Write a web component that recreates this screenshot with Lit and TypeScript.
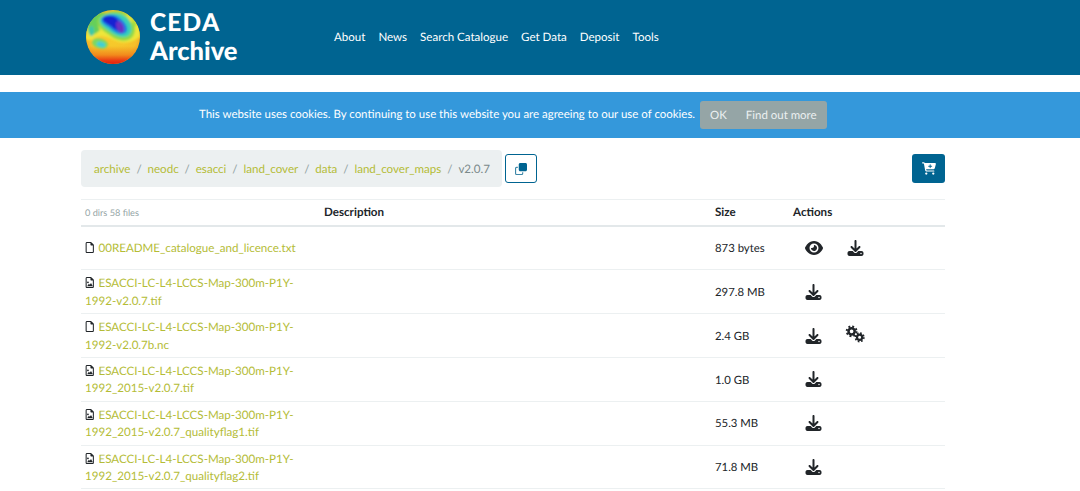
import { LitElement, html, css, svg } from "lit";
import { customElement } from "lit/decorators.js";

const icon = (vb: string, d: string, cls: string) => html`<svg class=${cls} viewBox=${vb} fill="currentColor"><path d=${d}></path></svg>`;
const DL = "M288 32c0-17.7-14.3-32-32-32s-32 14.3-32 32V274.7l-73.4-73.4c-12.5-12.5-32.8-12.5-45.3 0s-12.5 32.8 0 45.3l128 128c12.5 12.5 32.8 12.5 45.3 0l128-128c12.5-12.5 12.5-32.8 0-45.3s-32.8-12.5-45.3 0L288 274.7V32zM64 352c-35.3 0-64 28.7-64 64v32c0 35.3 28.7 64 64 64H448c35.3 0 64-28.7 64-64V416c0-35.3-28.7-64-64-64H346.5l-45.3 45.3c-25 25-65.5 25-90.5 0L165.5 352H64zm368 56a24 24 0 1 1 0 48 24 24 0 1 1 0-48z";
const EYE = "M288 32c-80.8 0-145.5 36.8-192.6 80.6C48.6 156 17.3 208 2.5 243.7c-3.3 7.9-3.3 16.7 0 24.6C17.3 304 48.6 356 95.4 399.4C142.5 443.2 207.2 480 288 480s145.5-36.8 192.6-80.6c46.8-43.5 78.1-95.4 93-131.1c3.3-7.9 3.3-16.7 0-24.6c-14.9-35.7-46.2-87.7-93-131.1C433.5 68.8 368.8 32 288 32zM144 256a144 144 0 1 1 288 0 144 144 0 1 1 -288 0zm144-64c0 35.3-28.7 64-64 64c-7.1 0-13.9-1.2-20.3-3.3c-5.5-1.8-11.9 1.6-11.7 7.4c.3 6.9 1.3 13.8 3.2 20.7c13.7 51.2 66.4 81.6 117.6 67.9s81.6-66.4 67.9-117.6c-11.1-41.5-47.8-69.4-88.6-71.1c-5.8-.2-9.2 6.1-7.4 11.7c2.1 6.4 3.3 13.2 3.3 20.3z";
const FILE = "M320 464c8.8 0 16-7.2 16-16V160H256c-17.7 0-32-14.3-32-32V48H64c-8.8 0-16 7.2-16 16V448c0 8.8 7.2 16 16 16H320zM0 64C0 28.7 28.7 0 64 0H229.5c17 0 33.3 6.7 45.3 18.7l90.5 90.5c12 12 18.7 28.3 18.7 45.3V448c0 35.3-28.7 64-64 64H64c-35.3 0-64-28.7-64-64V64z";
const IMG = FILE + "M150 250a42 42 0 1 1 -84 0 42 42 0 1 1 84 0zM70 430l80-120 45 55 55-85 85 150z";
const CART = "M0 24C0 10.7 10.7 0 24 0H69.5c22 0 41.5 12.8 50.6 32h411c26.3 0 45.5 25 38.6 50.4l-41 152.3c-8.5 31.4-37 53.3-69.5 53.3H170.7l5.4 28.5c2.2 11.3 12.1 19.5 23.6 19.5H488c13.3 0 24 10.7 24 24s-10.7 24-24 24H199.7c-34.6 0-64.3-24.6-70.7-58.5L77.4 54.5c-.7-3.8-4-6.5-7.9-6.5H24C10.7 48 0 37.3 0 24zM128 464a48 48 0 1 1 96 0 48 48 0 1 1 -96 0zm336-48a48 48 0 1 1 0 96 48 48 0 1 1 0-96zM252 160c0 11 9 20 20 20h44v44c0 11 9 20 20 20s20-9 20-20V180h44c11 0 20-9 20-20s-9-20-20-20H356V96c0-11-9-20-20-20s-20 9-20 20v44H272c-11 0-20 9-20 20z";

const gears = html`<svg class="gears" viewBox="0 0 20 18" fill="none" stroke="currentColor">
  <circle cx="6.6" cy="6.3" r="3.1" stroke-width="2.5"></circle>
  <circle cx="6.6" cy="6.3" r="4.9" stroke-width="2" stroke-dasharray="1.9 1.95"></circle>
  <circle cx="14.6" cy="12.3" r="2.6" stroke-width="2.2"></circle>
  <circle cx="14.6" cy="12.3" r="4.2" stroke-width="1.8" stroke-dasharray="1.65 1.65"></circle>
</svg>`;

const clone = html`<svg class="clone" viewBox="0 0 512 512">
  <path fill="#006491" d="M224 352H448c35.300 0 64-28.700 64-64V64c0-35.300-28.700-64-64-64H224c-35.300 0-64 28.700-64 64V288c0 35.300 28.700 64 64 64z"></path>
  <path fill="none" stroke="#3d87a8" stroke-width="48" d="M120 184H64c-22 0-40 18-40 40V448c0 22 18 40 40 40H288c22 0 40-18 40-40V392"></path>
</svg>`;

const globe = html`<svg class="globe" viewBox="0 0 54 54">
  ${svg`<defs>
    <clipPath id="gc"><circle cx="27" cy="27" r="27"></circle></clipPath>
    <filter id="b1" x="-40%" y="-40%" width="180%" height="180%"><feGaussianBlur stdDeviation="1"></feGaussianBlur></filter>
    <radialGradient id="gb" cx="50%" cy="45%" r="60%"><stop offset="0" stop-color="#f6cf2c"></stop><stop offset=".75" stop-color="#f6bf2a"></stop><stop offset="1" stop-color="#ee9a22"></stop></radialGradient>
    <linearGradient id="gr" x1="0" y1="0" x2="0" y2="1"><stop offset="0" stop-color="#f0901e" stop-opacity="0"></stop><stop offset=".5" stop-color="#f28a1c"></stop><stop offset=".8" stop-color="#ea3a14"></stop><stop offset="1" stop-color="#e0200f"></stop></linearGradient>
  </defs>
  <g clip-path="url(#gc)">
    <rect width="54" height="54" fill="url(#gb)"></rect>
    <rect y="36" width="54" height="18" fill="url(#gr)"></rect>
    <g filter="url(#b1)">
      <path d="M0 8H54V26C46 34 36 34 28 30C20 26 12 24 6 30L0 30Z" fill="#eee63a"></path>
      <path d="M2 12C6 4 14 2 20 3C14 8 10 14 14 20C10 24 6 26 3 24C1 20 1 16 2 12Z" fill="#66cf5a"></path>
      <ellipse cx="5.5" cy="21" rx="2.5" ry="5" fill="#3cc8a8"></ellipse>
      <path d="M12 9C17 0 38 -2 45 7C51 14 50 26 44 29C37 33 28 29 22 24C16 20 9 15 12 9Z" fill="#8ed94a"></path>
      <path d="M14 9C19 2 35 2 41 8C47 14 47 23 42 26C36 29 28 25 23 21C17 17 12 13 14 9Z" fill="#38d0b8"></path>
      <path d="M16 8C20 3 30 4 35 9C41 14 43 21 39 23C35 26 28 22 24 18C19 15 14 12 16 8Z" fill="#1f78e6"></path>
      <path d="M17 8C21 5 29 5 32 10C35 14 38 19 36 21C33 22 28 19 25 16C21 13 15 11 17 8Z" fill="#1722d2"></path>
      <ellipse cx="34" cy="17" rx="3.6" ry="6.2" transform="rotate(-22 34 17)" fill="#6a30c4"></ellipse>
      <path d="M36 4C42 1 50 8 51 16C47 16 44 12 42 8Z" fill="#a8dc3e"></path>
      <path d="M40 4C44 5 47 9 47 13C44 11 42 8 40 4Z" fill="#f0e63a"></path>
      <ellipse cx="14" cy="33.5" rx="8" ry="5" transform="rotate(15 14 33.5)" fill="#7cd860"></ellipse>
      <ellipse cx="15" cy="34.5" rx="4.5" ry="2.7" transform="rotate(15 15 34.5)" fill="#3fcfd6"></ellipse>
    </g>
  </g>`}
</svg>`;

type Row = { n: string; img: boolean; size: string; acts: string[] };
const rows: Row[] = [
  { n: "00README_catalogue_and_licence.txt", img: false, size: "873 bytes", acts: ["eye", "dl"] },
  { n: "ESACCI-LC-L4-LCCS-Map-300m-P1Y-1992-v2.0.7.tif", img: true, size: "297.8 MB", acts: ["dl"] },
  { n: "ESACCI-LC-L4-LCCS-Map-300m-P1Y-1992-v2.0.7b.nc", img: false, size: "2.4 GB", acts: ["dl", "gears"] },
  { n: "ESACCI-LC-L4-LCCS-Map-300m-P1Y-1992_2015-v2.0.7.tif", img: true, size: "1.0 GB", acts: ["dl"] },
  { n: "ESACCI-LC-L4-LCCS-Map-300m-P1Y-1992_2015-v2.0.7_qualityflag1.tif", img: true, size: "55.3 MB", acts: ["dl"] },
  { n: "ESACCI-LC-L4-LCCS-Map-300m-P1Y-1992_2015-v2.0.7_qualityflag2.tif", img: true, size: "71.8 MB", acts: ["dl"] },
];

@customElement("app-root")
export class AppRoot extends LitElement {
  static styles = css`
    :host { display: block; font-family: Lato, "Liberation Sans", sans-serif; font-size: 11.6px; line-height: 17.4px; color: #212529; background: #fff; height: 491px; overflow: hidden; text-rendering: geometricPrecision; }
    a { color: inherit; text-decoration: none; }
    .top { height: 75px; background: #006491; display: flex; align-items: center; padding-left: 86px; box-sizing: border-box; }
    .brand { display: flex; align-items: center; gap: 10px; width: 248px; color: #fff; }
    .globe { width: 54px; height: 54px; flex: none; margin-top: -2px; }
    .logotext { font-family: Lato, sans-serif; font-weight: 900; font-size: 25.5px; line-height: 28px; margin-top: -3px; display: block; }
    .logotext b { font-size: 24.5px; letter-spacing: 1.2px; font-weight: 900; }
    nav { display: flex; gap: 13px; color: #fff; font-size: 11.55px; }
    .cookie { margin-top: 17px; height: 46px; background: #3498db; color: #fff; display: flex; align-items: center; padding-left: 199px; gap: 5px; font-size: 11.46px; }
    .cookie .msg { margin-top: -1px; }
    .cookie .btns { display: flex; background: #95a5a6; border-radius: 3px; height: 28px; align-items: center; padding: 0 10px; gap: 19px; color: #ecf0f1; }
    .cookie .btns a { margin-top: 1px; }
    main { margin: 12px 135px 0 81px; }
    .bar { display: flex; align-items: center; height: 37px; }
    .crumbs { display: flex; height: 37px; align-items: center; background: #ecf0f1; border-radius: 4px; padding: 2px 12px 0 13px; box-sizing: border-box; color: #b4bc36; }
    .crumbs .sep { color: #95a5a6; padding: 0 5.9px; }
    .crumbs .cur { color: #7b8a8b; }
    .copy { margin-left: 3px; width: 32px; height: 29px; padding: 0; border: 1px solid #006491; border-radius: 3px; display: flex; align-items: center; justify-content: center; background: #fff; box-sizing: border-box; }
    .clone { width: 12px; height: 12px; }
    .cart { margin-left: auto; width: 33px; height: 29px; background: #006491; border-radius: 3px; color: #fff; display: flex; align-items: center; justify-content: center; }
    .cart svg { width: 14px; height: 13px; }
    .tbl { margin-top: 12px; border-top: 1px solid #ecf0f1; }
    .row { display: grid; grid-template-columns: 239px 391px 78px 156px; border-bottom: 1px solid #ecf0f1; height: 43.8px; box-sizing: border-box; align-items: center; }
    .head { height: 26.6px; border-bottom: 2px solid #e3e8ea; font-weight: 700; }
    .head > div { padding-left: 4px; }
    .count { font-size: 9.2px; font-weight: 400; color: #95a5a6; padding-top: 1px; }
    .name { padding: 2px 0 0 4px; width: 220px; color: #b4bc36; }
    .fi { width: 9.5px; height: 11px; color: #212529; vertical-align: -1px; margin-right: 4px; }
    .size { padding: 2px 0 0 4px; font-size: 11.35px; }
    .acts { display: flex; padding-left: 16px; align-items: center; gap: 24px; color: #212529; }
    .ic { width: 17px; height: 16px; display: block; }
    .ic.eye { width: 18px; }
    .gears { width: 20px; height: 18px; display: block; margin-top: -3px; margin-left: -1px; }
  `;

  render() {
    const crumbs = ["archive", "neodc", "esacci", "land_cover", "data", "land_cover_maps"];
    return html`
      <header class="top">
        <a class="brand">${globe}<span class="logotext"><b>CEDA</b><br />Archive</span></a>
        <nav>${["About", "News", "Search Catalogue", "Get Data", "Deposit", "Tools"].map((t) => html`<a>${t}</a>`)}</nav>
      </header>
      <section class="cookie">
        <span class="msg">This website uses cookies. By continuing to use this website you are agreeing to our use of cookies.</span>
        <span class="btns"><a>OK</a><a>Find out more</a></span>
      </section>
      <main>
        <div class="bar">
          <div class="crumbs">
            ${crumbs.map((c) => html`<a>${c}</a><span class="sep">/</span>`)}<span class="cur">v2.0.7</span>
          </div>
          <button class="copy">${clone}</button>
          <div class="cart">${icon("0 0 576 512", CART, "")}</div>
        </div>
        <div class="tbl">
          <div class="row head">
            <div class="count">0 dirs 58 files</div><div>Description</div><div>Size</div><div>Actions</div>
          </div>
          ${rows.map((r) => html`
            <div class="row">
              <div class="name">${icon("0 0 384 512", r.img ? IMG : FILE, "fi")}<a>${r.n}</a></div>
              <div></div>
              <div class="size">${r.size}</div>
              <div class="acts">
                ${r.acts.map((a) => a === "eye" ? icon("0 0 576 512", EYE, "ic eye") : a === "dl" ? icon("0 0 512 512", DL, "ic") : gears)}
              </div>
            </div>`)}
        </div>
      </main>
    `;
  }
}
